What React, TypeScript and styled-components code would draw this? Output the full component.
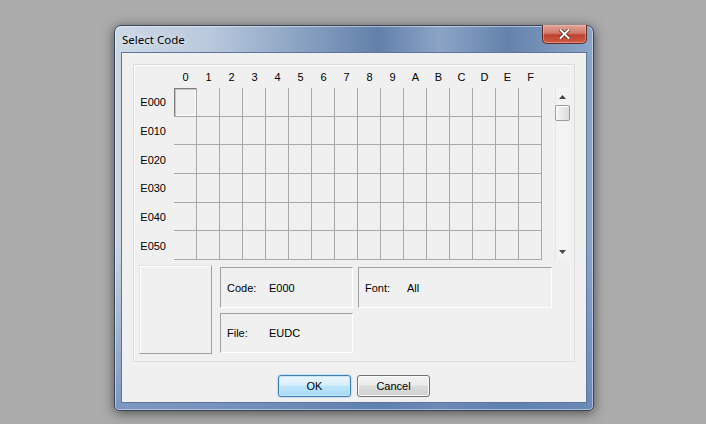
import React from "react";
import styled, { createGlobalStyle } from "styled-components";

const GlobalStyle = createGlobalStyle`
  html, body {
    margin: 0;
    padding: 0;
    background: #ababab;
  }
  body {
    font-family: "Liberation Sans", Arial, sans-serif;
    font-size: 11px;
    color: #000;
  }
`;

const Desktop = styled.div`
  width: 706px;
  height: 424px;
  padding: 25px 0 0 114px;
  box-sizing: border-box;
  overflow: hidden;
  background: #ababab;
`;

const Window = styled.div`
  width: 480px;
  height: 386px;
  box-sizing: border-box;
  border: 1px solid #3a4658;
  border-radius: 7px 7px 5px 5px;
  padding: 0 6px 7px 6px;
  display: flex;
  flex-direction: column;
  background:
    linear-gradient(180deg, rgba(0, 0, 0, 0) 0%, rgba(0, 0, 0, 0) 55%, rgba(95, 128, 178, 0.75) 100%),
    linear-gradient(90deg,
      rgba(205, 216, 230, 1) 0%,
      rgba(185, 200, 220, 1) 20%,
      rgba(135, 160, 193, 1) 40%,
      rgba(98, 128, 170, 1) 55%,
      rgba(140, 165, 198, 1) 68%,
      rgba(100, 130, 172, 1) 82%,
      rgba(140, 166, 200, 1) 100%);
  box-shadow: 0 2px 12px rgba(0, 0, 0, 0.55), inset 0 0 0 1px rgba(255, 255, 255, 0.45);
`;

const TitleBar = styled.div`
  height: 26px;
  display: flex;
  align-items: center;
  justify-content: space-between;
  padding-left: 1px;
  flex-shrink: 0;
`;

const Title = styled.span`
  font-family: "Segoe UI", "Noto Sans", sans-serif;
  font-size: 11.5px;
  color: #000;
  text-shadow: 0 0 6px rgba(255, 255, 255, 0.9);
`;

const CloseButton = styled.div`
  align-self: flex-start;
  margin-top: -1px;
  width: 45px;
  height: 19px;
  box-sizing: border-box;
  border: 1px solid #5e2b26;
  border-top: none;
  border-radius: 0 0 5px 5px;
  background: linear-gradient(180deg, #e2a497 0%, #d27a6b 45%, #bd4231 55%, #cf5a42 100%);
  box-shadow: inset 0 0 0 1px rgba(255, 200, 190, 0.45);
  display: flex;
  align-items: center;
  justify-content: center;
`;

const Client = styled.div`
  flex: 1;
  background: #f0f0f0;
  border: 1px solid #5c7598;
  display: flex;
  flex-direction: column;
  padding: 11px 11px 5px 11px;
  box-sizing: border-box;
`;

const Panel = styled.div`
  height: 298px;
  box-sizing: border-box;
  border: 1px solid #dcdcdc;
  box-shadow: inset 1px 1px 0 #fafafa;
  display: flex;
  flex-direction: column;
`;

const TopSection = styled.div`
  display: flex;
`;

const CharGrid = styled.div`
  display: grid;
  grid-template-columns: 40px repeat(16, 23px);
  grid-template-rows: 23px repeat(6, 28.67px);
`;

const ColHeader = styled.div`
  display: flex;
  align-items: center;
  justify-content: center;
  padding-top: 1px;
`;

const RowLabel = styled.div`
  display: flex;
  align-items: center;
  justify-content: flex-end;
  padding-right: 8px;
`;

const Cell = styled.div<{ $selected?: boolean }>`
  box-sizing: border-box;
  border-right: 1px solid #a8a8a8;
  border-bottom: 1px solid #a8a8a8;
  background: #f0f0f0;
  box-shadow: ${(p) =>
    p.$selected
      ? "inset 1px 1px 0 #7e7e7e, inset 2px 2px 0 #c4c4c4, inset -1px -1px 0 #ffffff"
      : "none"};
`;

const Corner = styled.div``;

const ScrollBar = styled.div`
  margin: 23px 0 0 13px;
  width: 15px;
  height: 172px;
  background: #f3f3f3;
  box-shadow: inset 1px 0 0 #e6e6e6;
  display: flex;
  flex-direction: column;
`;

const ScrollArrow = styled.div`
  height: 17px;
  display: flex;
  align-items: center;
  justify-content: center;
  flex-shrink: 0;
`;

const ScrollTrack = styled.div`
  flex: 1;
`;

const Thumb = styled.div`
  height: 16px;
  box-sizing: border-box;
  border: 1px solid #9b9b9b;
  border-radius: 2px;
  background: linear-gradient(90deg, #f6f6f6 0%, #e9e9e9 50%, #dcdcdc 100%);
  box-shadow: inset 1px 1px 0 #ffffff;
`;

const BottomSection = styled.div`
  display: flex;
  padding: 5px 0 0 5px;
`;

const Preview = styled.div`
  width: 73px;
  height: 89px;
  box-sizing: border-box;
  border-top: 1px solid #e3e3e3;
  border-left: 1px solid #e3e3e3;
  border-right: 1px solid #a0a0a0;
  border-bottom: 1px solid #a0a0a0;
  box-shadow: inset 1px 1px 0 #ffffff;
`;

const InfoColumn = styled.div`
  display: flex;
  flex-direction: column;
  gap: 5px;
  margin: 2px 0 0 8px;
`;

const InfoBox = styled.div<{ $w: number; $h: number }>`
  width: ${(p) => p.$w}px;
  height: ${(p) => p.$h}px;
  box-sizing: border-box;
  border-top: 1px solid #a0a0a0;
  border-left: 1px solid #a0a0a0;
  border-right: 1px solid #ffffff;
  border-bottom: 1px solid #ffffff;
  display: flex;
  align-items: center;
  padding-left: 6px;
`;

const InfoLabel = styled.span`
  width: 42px;
`;

const FontColumn = styled.div`
  margin: 2px 0 0 5px;
`;

const ButtonRow = styled.div`
  display: flex;
  justify-content: center;
  gap: 6px;
  margin-top: 13px;
`;

const Button = styled.button<{ $default?: boolean }>`
  width: 73px;
  height: 22px;
  box-sizing: border-box;
  font-family: "Liberation Sans", Arial, sans-serif;
  font-size: 11px;
  color: #000;
  border-radius: 3px;
  border: 1px solid ${(p) => (p.$default ? "#3c7fb1" : "#707070")};
  background: ${(p) =>
    p.$default
      ? "linear-gradient(180deg, #eaf6fd 0%, #d9f0fc 45%, #bee6fd 50%, #a7d9f5 100%)"
      : "linear-gradient(180deg, #f2f2f2 0%, #ebebeb 45%, #dddddd 50%, #cfcfcf 100%)"};
  box-shadow: ${(p) =>
    p.$default
      ? "inset 0 0 0 1px #c4e8fb, 0 0 2px rgba(60, 160, 220, 0.7)"
      : "inset 0 0 0 1px #fcfcfc"};
  padding: 0;
`;

const hex = "0123456789ABCDEF".split("");
const rows = ["E000", "E010", "E020", "E030", "E040", "E050"];

const Triangle = ({ up }: { up?: boolean }) => (
  <svg width="7" height="4" viewBox="0 0 7 4">
    <path d={up ? "M0 4 L3.5 0 L7 4 Z" : "M0 0 L3.5 4 L7 0 Z"} fill="#4a4a4a" />
  </svg>
);

export default function App() {
  return (
    <>
      <GlobalStyle />
      <Desktop>
        <Window>
          <TitleBar>
            <Title>Select Code</Title>
            <CloseButton>
              <svg width="11" height="10" viewBox="0 0 11 10">
                <path
                  d="M1.5 1 L9.5 9 M9.5 1 L1.5 9"
                  stroke="#5a1a14"
                  strokeWidth="3.4"
                  strokeLinecap="square"
                />
                <path
                  d="M1.5 1 L9.5 9 M9.5 1 L1.5 9"
                  stroke="#ffffff"
                  strokeWidth="2"
                  strokeLinecap="square"
                />
              </svg>
            </CloseButton>
          </TitleBar>
          <Client>
            <Panel>
              <TopSection>
                <CharGrid>
                  <Corner />
                  {hex.map((h) => (
                    <ColHeader key={h}>{h}</ColHeader>
                  ))}
                  {rows.map((r, ri) => (
                    <React.Fragment key={r}>
                      <RowLabel>{r}</RowLabel>
                      {hex.map((h, ci) => (
                        <Cell key={h} $selected={ri === 0 && ci === 0} />
                      ))}
                    </React.Fragment>
                  ))}
                </CharGrid>
                <ScrollBar>
                  <ScrollArrow>
                    <Triangle up />
                  </ScrollArrow>
                  <Thumb />
                  <ScrollTrack />
                  <ScrollArrow>
                    <Triangle />
                  </ScrollArrow>
                </ScrollBar>
              </TopSection>
              <BottomSection>
                <Preview />
                <InfoColumn>
                  <InfoBox $w={133} $h={41}>
                    <InfoLabel>Code:</InfoLabel>
                    <span>E000</span>
                  </InfoBox>
                  <InfoBox $w={133} $h={40}>
                    <InfoLabel>File:</InfoLabel>
                    <span>EUDC</span>
                  </InfoBox>
                </InfoColumn>
                <FontColumn>
                  <InfoBox $w={194} $h={41}>
                    <InfoLabel>Font:</InfoLabel>
                    <span>All</span>
                  </InfoBox>
                </FontColumn>
              </BottomSection>
            </Panel>
            <ButtonRow>
              <Button $default>OK</Button>
              <Button>Cancel</Button>
            </ButtonRow>
          </Client>
        </Window>
      </Desktop>
    </>
  );
}
